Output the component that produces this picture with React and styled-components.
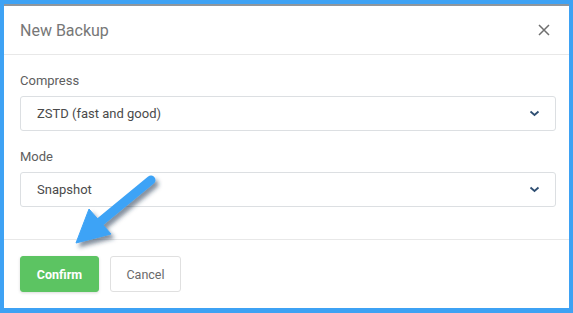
import React from 'react';
import { styled, createGlobalStyle } from 'styled-components';

const GlobalStyle = createGlobalStyle`
  html, body {
    margin: 0;
    padding: 0;
    background: #3ea2f4;
  }
  body {
    font-family: Roboto, "Liberation Sans", Arial, sans-serif;
  }
`;

const fields = [
  { label: 'Compress', value: 'ZSTD (fast and good)' },
  { label: 'Mode', value: 'Snapshot' },
];

const Chevron = () => (
  <svg width="11" height="7" viewBox="0 0 11 7">
    <path d="M1.5 1.5 L5.5 5 L9.5 1.5" fill="none" stroke="#2e4e72" strokeWidth="1.8" />
  </svg>
);

const CloseIcon = () => (
  <svg width="12" height="12" viewBox="0 0 12 12">
    <path d="M1 1 L11 11 M11 1 L1 11" stroke="#6f6f6f" strokeWidth="1.5" />
  </svg>
);

const Arrow = () => (
  <ArrowSvg width="573" height="313" viewBox="0 0 573 313">
    <defs>
      <filter id="sh" x="-20%" y="-20%" width="150%" height="150%">
        <feDropShadow dx="3" dy="4" stdDeviation="2" floodColor="#1d3450" floodOpacity="0.55" />
      </filter>
    </defs>
    <g filter="url(#sh)" fill="#3da3f6" stroke="#3da3f6">
      <line x1="151" y1="180" x2="100" y2="222" strokeWidth="9" strokeLinecap="round" />
      <polygon points="76,243 89,209 111,234" strokeWidth="1" strokeLinejoin="round" />
    </g>
  </ArrowSvg>
);

export default function App() {
  return (
    <>
      <GlobalStyle />
      <Page>
        <Dialog>
          <Header>
            <Title>New Backup</Title>
            <CloseButton>
              <CloseIcon />
            </CloseButton>
          </Header>
          <Body>
            {fields.map((f) => (
              <Field key={f.label}>
                <Label>{f.label}</Label>
                <Select>
                  <span>{f.value}</span>
                  <Chevron />
                </Select>
              </Field>
            ))}
          </Body>
          <Footer>
            <Button primary width={79}>Confirm</Button>
            <Button width={71}>Cancel</Button>
          </Footer>
        </Dialog>
        <Arrow />
      </Page>
    </>
  );
}

const Page = styled.div`
  position: relative;
  padding: 4px 4px 5px 4px;
`;

const Dialog = styled.div`
  background: #fff;
  border-top: 2px solid #8f969c;
`;

const Header = styled.div`
  height: 48px;
  display: flex;
  align-items: center;
  justify-content: space-between;
  padding: 0 19px 0 16px;
  border-bottom: 1px solid #e8e8e8;
`;

const Title = styled.div`
  font-size: 16px;
  color: #777;
`;

const CloseButton = styled.div`
  display: flex;
  align-items: center;
`;

const Body = styled.div`
  padding: 16px 13px 16px 16px;
  display: flex;
  flex-direction: column;
  gap: 16px;
`;

const Field = styled.div`
  display: flex;
  flex-direction: column;
  &:last-child {
    margin-bottom: 16px;
  }
`;

const Label = styled.div`
  font-size: 13px;
  line-height: 20px;
  color: #5e5e5e;
  margin-bottom: 5px;
`;

const Select = styled.div`
  height: 35px;
  box-sizing: border-box;
  border: 1px solid #dcdfe2;
  border-radius: 3px;
  display: flex;
  align-items: center;
  justify-content: space-between;
  padding: 0 15px 0 16px;
  font-size: 13px;
  color: #4a4a4a;
`;

const Footer = styled.div`
  border-top: 1px solid #e8e8e8;
  padding: 16px;
  display: flex;
  gap: 11px;
`;

const Button = styled.div`
  width: ${({ width }) => width}px;
  height: 36px;
  box-sizing: border-box;
  display: flex;
  align-items: center;
  justify-content: center;
  border-radius: 3px;
  font-size: 12.5px;
  font-weight: ${({ primary }) => (primary ? 700 : 400)};
  color: ${({ primary }) => (primary ? '#fff' : '#6a6a6a')};
  background: ${({ primary }) => (primary ? '#5cc462' : '#fff')};
  border: 1px solid ${({ primary }) => (primary ? '#5cc462' : '#e0e0e0')};
  box-shadow: ${({ primary }) => (primary ? '0 1px 3px rgba(0,0,0,0.15)' : 'none')};
`;

const ArrowSvg = styled.svg`
  position: absolute;
  left: 0;
  top: 0;
  pointer-events: none;
`;
